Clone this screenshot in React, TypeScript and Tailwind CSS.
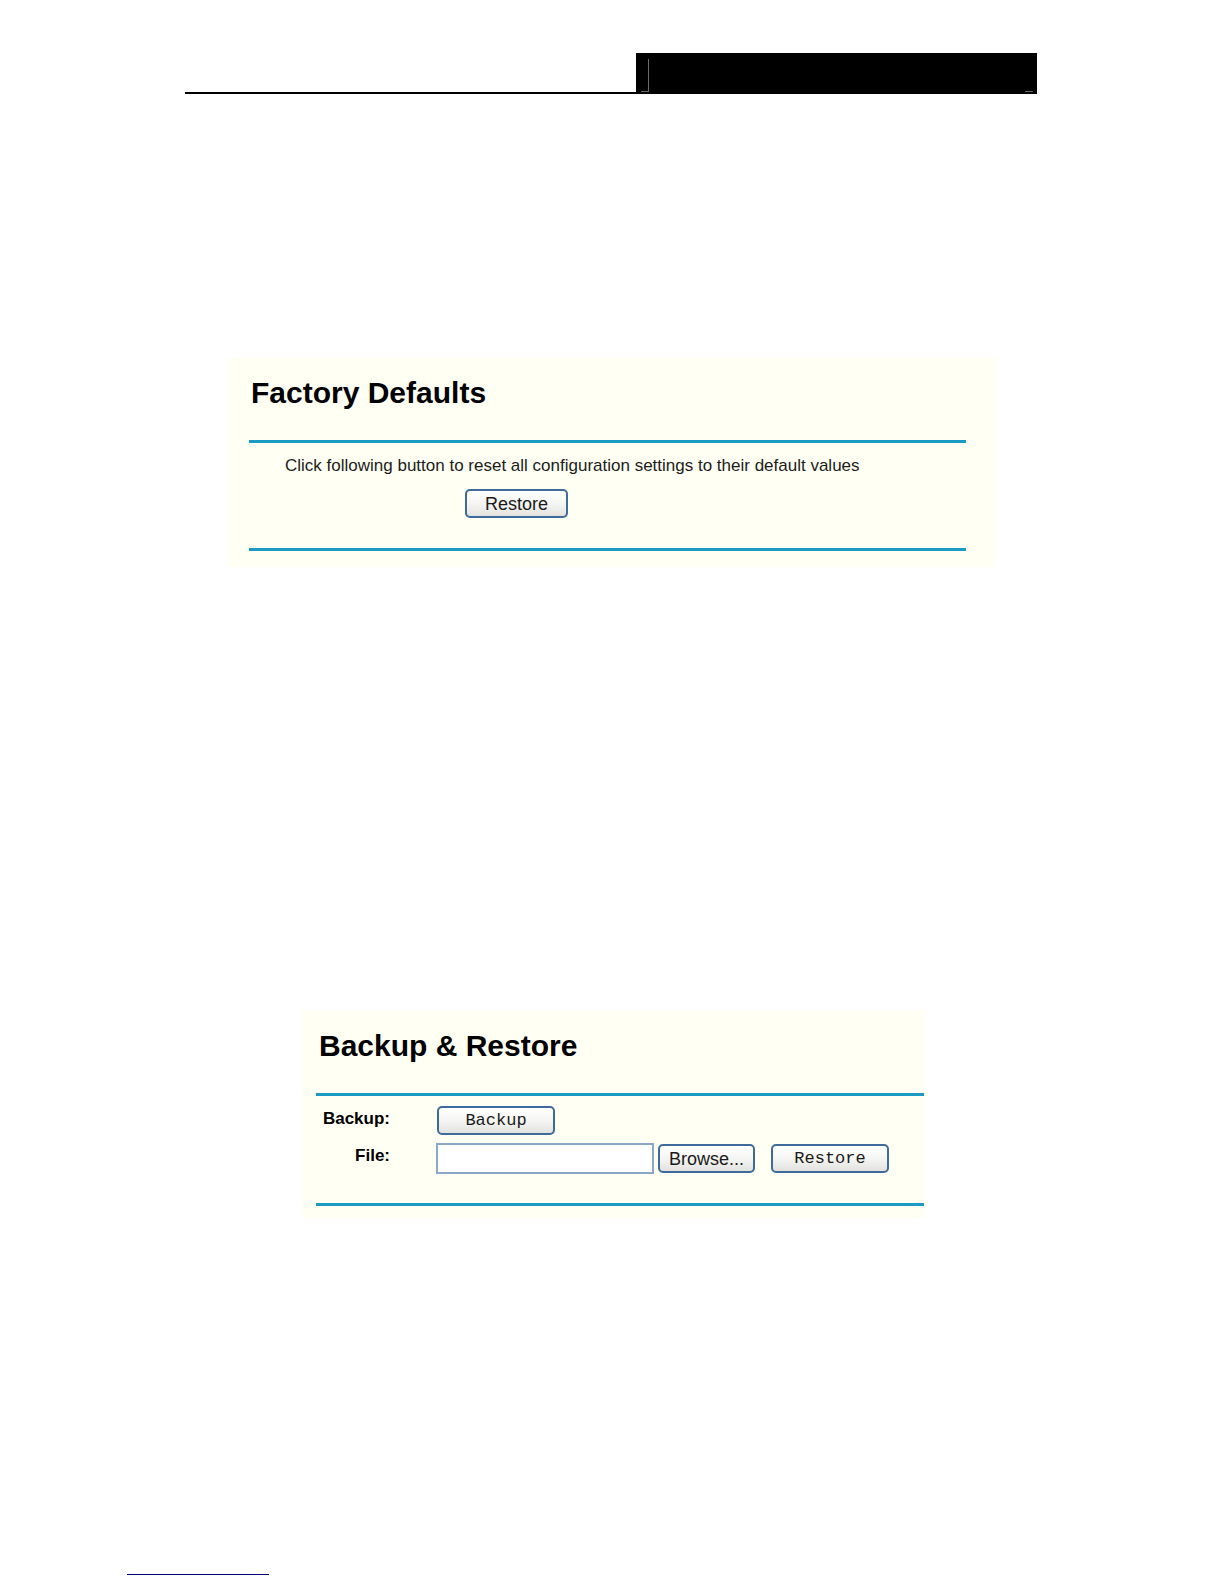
import type { ReactNode } from "react";

const sans = "font-['Liberation_Sans',Arial,sans-serif]";

function Heading({ children }: { children: ReactNode }) {
  return <h2 className="text-[30px] leading-9 font-bold text-black">{children}</h2>;
}

function XpButton({ id, children, className }: { id?: string; children: ReactNode; className: string }) {
  return (
    <button
      id={id}
      type="button"
      className={`h-[29px] shrink-0 rounded-[5px] border-2 border-[#3f6a9c] bg-linear-to-b from-white via-[#f5f5f3] to-[#e2e2df] text-center leading-[26px] text-[#1a1a1a] ${className}`}
    >
      {children}
    </button>
  );
}

export default function App() {
  return (
    <div className={`bg-white pt-[53px] pb-2 ${sans}`}>
      <header className="mr-[187px] ml-[185px] grid grid-cols-[451fr_401fr] border-b-2 border-black">
        <div className="col-start-2 flex h-[39px] items-end justify-between bg-black pr-1 pl-[5px]">
          <div className="h-[33px] w-2 border-r border-b border-[#6b6b6b]" />
          <div className="h-px w-2 bg-[#6b6b6b]" />
        </div>
      </header>

      <main>
        <section className="mt-[263px] mr-[229px] ml-[228px] bg-[#fffff3] pt-[18px] pr-[29px] pb-4 pl-[21px]">
          <div className="pl-[2px]">
            <Heading>Factory Defaults</Heading>
          </div>
          <div className="mt-[29px] border-y-[3px] border-[#1b9ac4] pt-[13px] pb-[30px]">
            <p className="pl-9 text-[17px] leading-5 text-[#1c1c1c]">
              Click following button to reset all configuration settings to their default values
            </p>
            <div className="mt-[13px] flex pl-[216px]">
              <XpButton className="w-[103px] text-lg">Restore</XpButton>
            </div>
          </div>
        </section>

        <section className="mt-[444px] mr-[300px] ml-[302px] bg-[#fffff3] pt-[17px] pb-[13px] pl-[14px]">
          <div className="pl-[3px]">
            <Heading>Backup &amp; Restore</Heading>
          </div>
          <form
            className="mt-[29px] grid grid-cols-[74px_1fr] gap-x-[46px] gap-y-2 border-y-[3px] border-[#1b9ac4] pt-[10px] pb-[29px]"
            onSubmit={(e) => e.preventDefault()}
          >
            <label htmlFor="backup" className="pt-[3px] text-right text-[17px] leading-5 font-bold">
              Backup:
            </label>
            <div className="flex pl-px">
              <XpButton id="backup" className="w-[118px] font-['Liberation_Mono',monospace] text-[17px]">
                Backup
              </XpButton>
            </div>
            <label htmlFor="file" className="pt-[3px] text-right text-[17px] leading-5 font-bold">
              File:
            </label>
            <div className="flex items-center">
              <input
                id="file"
                type="text"
                className="h-[31px] w-[218px] border-2 border-[#8aa9c9] bg-white px-1 text-base"
              />
              <XpButton className="ml-1 w-[97px] text-lg">Browse...</XpButton>
              <XpButton className="ml-4 w-[118px] font-['Liberation_Mono',monospace] text-[17px]">Restore</XpButton>
            </div>
          </form>
        </section>
      </main>

      <footer className="mt-[355px] ml-[127px] w-[142px] border-b border-[#00007a]" />
    </div>
  );
}
